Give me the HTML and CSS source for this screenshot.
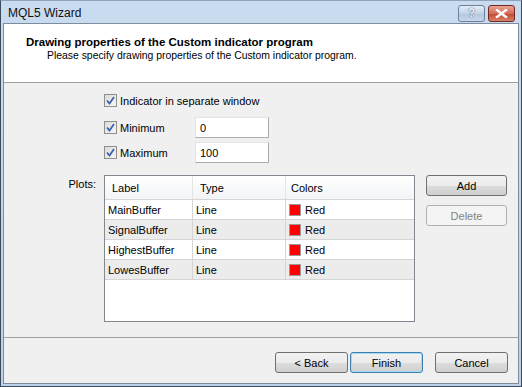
FILE: index.html
```html
<!DOCTYPE html>
<html>
<head>
    <meta charset="utf-8">
    <title>MQL5 Wizard</title>
    <link rel="stylesheet" href="styles.css">
</head>
<body>
    <div class="window">
        <div class="titlebar">
            <span class="title">MQL5 Wizard</span>
            <div class="caption-btns">
                <div class="cap-btn help">?</div>
                <div class="cap-btn close">
                    <svg width="13" height="9" viewBox="0 0 13 9"><path d="M2 1 L11 8 M11 1 L2 8" stroke="#fff" stroke-width="2.4" stroke-linecap="square"/></svg>
                </div>
            </div>
        </div>

        <div class="frame">
            <div class="header">
                <div class="heading">Drawing properties of the Custom indicator program</div>
                <div class="subheading">Please specify drawing properties of the Custom indicator program.</div>
            </div>

            <div class="content">
                <div class="opts">
                    <div class="opt first">
                        <label class="check"><span class="box"><svg width="9" height="9" viewBox="0 0 9 9"><path d="M1 4.5 L3.5 7.5 L8 1" fill="none" stroke="#3b5fa8" stroke-width="1.7"/></svg></span>Indicator in separate window</label>
                    </div>
                    <div class="opt second">
                        <label class="check wide"><span class="box"><svg width="9" height="9" viewBox="0 0 9 9"><path d="M1 4.5 L3.5 7.5 L8 1" fill="none" stroke="#3b5fa8" stroke-width="1.7"/></svg></span>Minimum</label>
                        <input type="text" class="field" value="0">
                    </div>
                    <div class="opt third">
                        <label class="check wide"><span class="box"><svg width="9" height="9" viewBox="0 0 9 9"><path d="M1 4.5 L3.5 7.5 L8 1" fill="none" stroke="#3b5fa8" stroke-width="1.7"/></svg></span>Maximum</label>
                        <input type="text" class="field" value="100">
                    </div>
                </div>

                <div class="plots">
                    <div class="plots-label">Plots:</div>
                    <div class="list">
                        <div class="list-head">
                            <div class="col c1">Label</div>
                            <div class="col c2">Type</div>
                            <div class="col c3">Colors</div>
                        </div>
                        <div class="list-row">
                            <div class="cell c1">MainBuffer</div>
                            <div class="cell c2">Line</div>
                            <div class="cell c3"><span class="swatch"></span>Red</div>
                        </div>
                        <div class="list-row alt">
                            <div class="cell c1">SignalBuffer</div>
                            <div class="cell c2">Line</div>
                            <div class="cell c3"><span class="swatch"></span>Red</div>
                        </div>
                        <div class="list-row">
                            <div class="cell c1">HighestBuffer</div>
                            <div class="cell c2">Line</div>
                            <div class="cell c3"><span class="swatch"></span>Red</div>
                        </div>
                        <div class="list-row alt">
                            <div class="cell c1">LowesBuffer</div>
                            <div class="cell c2">Line</div>
                            <div class="cell c3"><span class="swatch"></span>Red</div>
                        </div>
                    </div>
                    <div class="side-btns">
                        <button class="btn">Add</button>
                        <button class="btn disabled">Delete</button>
                    </div>
                </div>
            </div>

            <div class="footer">
                <button class="btn nav">&lt; Back</button>
                <button class="btn nav focus">Finish</button>
                <button class="btn nav cancel">Cancel</button>
            </div>
        </div>
    </div>
</body>
</html>
```

FILE: styles.css
```css
html, body {
    margin: 0;
    padding: 0;
}
body {
    font-family: "Liberation Sans", Arial, sans-serif;
    font-size: 11px;
    color: #000;
    background: #fff;
}
.window {
    width: 522px;
    height: 387px;
    box-sizing: border-box;
    border: 1px solid #3c4a5c;
    border-top-color: #8fa3bd;
    background: linear-gradient(to bottom, #c9dbef, #bcd1ea);
    display: flex;
    flex-direction: column;
}
.titlebar {
    height: 22px;
    display: flex;
    align-items: center;
    justify-content: space-between;
    padding: 0 6px 0 7px;
}
.title {
    font-size: 12px;
    color: #111;
    padding-top: 1px;
}
.caption-btns {
    display: flex;
    gap: 3px;
    margin-top: 2px;
}
.cap-btn {
    width: 25px;
    height: 15px;
    border: 1px solid #6d7f99;
    border-radius: 3px;
    display: flex;
    align-items: center;
    justify-content: center;
}
.help {
    background: linear-gradient(to bottom, #e3ecf7, #c3d3e6 50%, #b3c6de 51%, #c9d8ea);
    color: #eef3f9;
    font-weight: bold;
    font-size: 12px;
    text-shadow: 0 0 1px #4a5d78, 0 0 1px #4a5d78;
}
.close {
    border-color: #6f2a22;
    background: linear-gradient(to bottom, #e8a493, #d36c55 50%, #c04a30 51%, #d8826a);
}
.frame {
    flex: 1;
    margin: 0 2px 2px 2px;
    border: 1px solid #7e8c9e;
    background: #f0f0f0;
    display: flex;
    flex-direction: column;
}
.header {
    background: #fff;
    height: 59px;
    border-bottom: 1px solid #a0a0a0;
    box-sizing: border-box;
    padding: 11px 0 0 22px;
}
.heading {
    font-weight: bold;
    font-size: 11.5px;
    line-height: 14px;
}
.subheading {
    padding-left: 21px;
    font-size: 10.4px;
    line-height: 13px;
    margin-top: 0;
}
.content {
    height: 255px;
    border-bottom: 1px solid #a0a0a0;
    box-sizing: border-box;
    padding-top: 7px;
}
.opts {
    margin-left: 100px;
}
.opt {
    display: flex;
    align-items: center;
    height: 21px;
}
.opt.second {
    margin-top: 6px;
}
.opt.third {
    margin-top: 4px;
}
.check {
    display: flex;
    align-items: center;
    gap: 3px;
}
.check.wide {
    width: 91px;
}
.box {
    width: 11px;
    height: 11px;
    border: 1px solid #8e8f8f;
    background: linear-gradient(135deg, #dcdcdc, #f6f6f6);
    display: flex;
    align-items: center;
    justify-content: center;
}
.field {
    width: 74px;
    height: 21px;
    box-sizing: border-box;
    border: 1px solid #abadb3;
    border-top-color: #e3e3e3;
    border-left-color: #e2e3ea;
    background: #fff;
    font: inherit;
    padding: 0 4px;
    margin: 0;
}
.plots {
    display: flex;
    align-items: flex-start;
    margin-top: 12px;
}
.plots-label {
    width: 92px;
    text-align: right;
    padding-right: 8px;
    padding-top: 3px;
}
.list {
    width: 311px;
    height: 147px;
    box-sizing: border-box;
    border: 1px solid #828790;
    background: #fff;
}
.list-head {
    display: flex;
    height: 24px;
    background: linear-gradient(to bottom, #ffffff, #f3f4f6);
    border-bottom: 1px solid #d5d5d5;
    box-sizing: border-box;
}
.col {
    display: flex;
    align-items: center;
    padding-left: 7px;
    border-right: 1px solid #e5e5e5;
    box-sizing: border-box;
}
.col.c3 {
    border-right: none;
    padding-left: 5px;
}
.c1 { width: 88px; }
.c2 { width: 93px; }
.c3 { flex: 1; }
.list-row {
    display: flex;
    height: 20px;
    border-bottom: 1px solid #d5d5d5;
    box-sizing: border-box;
}
.list-row.alt {
    background: #ececec;
}
.cell {
    display: flex;
    align-items: center;
    padding-left: 3px;
    border-right: 1px solid #d5d5d5;
    box-sizing: border-box;
}
.cell.c3 {
    border-right: none;
}
.swatch {
    width: 10px;
    height: 10px;
    border: 1px solid #9a9a9a;
    background: #ff0000;
    margin-right: 4px;
}
.side-btns {
    display: flex;
    flex-direction: column;
    gap: 9px;
    margin-left: 11px;
}
.btn {
    width: 81px;
    height: 21px;
    box-sizing: border-box;
    border: 1px solid #707070;
    border-radius: 3px;
    background: linear-gradient(to bottom, #f2f2f2, #ebebeb 50%, #dddddd 51%, #cfcfcf);
    font: inherit;
    color: #000;
    padding: 0;
    margin: 0;
}
.btn.disabled {
    border-color: #adb2b5;
    background: #f4f4f4;
    color: #838383;
}
.footer {
    flex: 1;
    display: flex;
    justify-content: flex-end;
    align-items: flex-start;
    padding: 14px 10px 0 0;
}
.btn.nav {
    width: 73px;
}
.btn.focus {
    margin-left: 2px;
    border-color: #3c7fb1;
    box-shadow: inset 0 0 0 1px #a7d9f5;
}
.btn.cancel {
    margin-left: 12px;
}
```
